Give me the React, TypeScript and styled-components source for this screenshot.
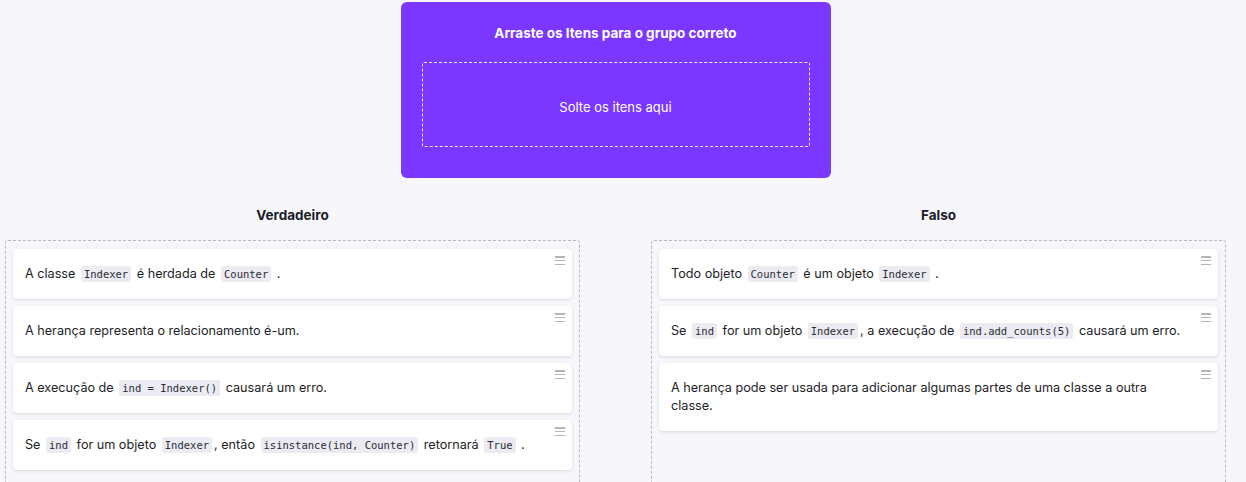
import React from "react";
import styled, { createGlobalStyle } from "styled-components";

const Global = createGlobalStyle`
  html, body { margin: 0; padding: 0; background: #f7f7fb; }
  body { font-family: Inter, "Noto Sans", sans-serif; color: #1d1e26; }
`;

const Page = styled.div`
  width: 1221px;
  margin-left: 5px;
  padding-top: 2px;
  display: flex;
  flex-direction: column;
  align-items: center;
`;

const DropPanel = styled.div`
  width: 430px;
  height: 176px;
  box-sizing: border-box;
  background: #7b36ff;
  border-radius: 6px;
  padding: 23px 21px 31px;
  display: flex;
  flex-direction: column;
  align-items: center;
  color: #fff;
`;

const PanelTitle = styled.div`
  font-size: 13.5px;
  font-weight: 700;
  line-height: 16px;
  height: 37px;
`;

const DropZone = styled.div`
  flex: 1;
  align-self: stretch;
  border: 1px dashed rgba(255, 255, 255, 0.9);
  border-radius: 2px;
  padding-top: 4px;
  display: flex;
  align-items: center;
  justify-content: center;
  font-size: 13px;
`;

const Columns = styled.div`
  align-self: stretch;
  display: grid;
  grid-template-columns: 575px 575px;
  column-gap: 71px;
  margin-top: 29px;
`;

const Column = styled.div`
  display: flex;
  flex-direction: column;
`;

const Heading = styled.div`
  text-align: center;
  font-size: 13.5px;
  font-weight: 700;
  line-height: 16px;
  color: #1b1c28;
  margin-bottom: 17px;
`;

const Bucket = styled.div`
  border: 1px dashed #b9b9c2;
  border-radius: 3px;
  padding: 8px 7px 8px 7px;
  min-height: 240px;
  display: flex;
  flex-direction: column;
  gap: 7px;
`;

const Card = styled.div`
  position: relative;
  background: #fff;
  border-radius: 4px;
  box-shadow: 0 1px 3px rgba(20, 20, 50, 0.14);
  padding: 16px 28px 16px 12px;
  font-size: 12.65px;
  line-height: 18px;
`;

const Handle = styled.span`
  position: absolute;
  top: 7px;
  right: 7px;
  width: 10px;
  height: 9px;
  display: flex;
  flex-direction: column;
  justify-content: space-between;
  & > i {
    display: block;
    height: 1.5px;
    background: #b4b4bd;
  }
`;

const Code = styled.code`
  font-family: "DejaVu Sans Mono", "Liberation Mono", monospace;
  font-size: 10.5px;
  background: #ebebf1;
  border-radius: 3px;
  padding: 2px 3px;
  margin: 0 2px;
  color: #2a2b36;
`;

type Part = string | { c: string };
const c = (s: string) => ({ c: s });

const left: Part[][] = [
  ["A classe ", c("Indexer"), " é herdada de ", c("Counter"), " ."],
  ["A herança representa o relacionamento é-um."],
  ["A execução de ", c("ind = Indexer()"), " causará um erro."],
  ["Se ", c("ind"), " for um objeto ", c("Indexer"), ", então ", c("isinstance(ind, Counter)"), " retornará ", c("True"), " ."],
];

const right: Part[][] = [
  ["Todo objeto ", c("Counter"), " é um objeto ", c("Indexer"), " ."],
  ["Se ", c("ind"), " for um objeto ", c("Indexer"), ", a execução de ", c("ind.add_counts(5)"), " causará um erro."],
  ["A herança pode ser usada para adicionar algumas partes de uma classe a outra classe."],
];

const Item = ({ parts }: { parts: Part[] }) => (
  <Card>
    {parts.map((p, i) => (typeof p === "string" ? <React.Fragment key={i}>{p}</React.Fragment> : <Code key={i}>{p.c}</Code>))}
    <Handle><i /><i /><i /></Handle>
  </Card>
);

export default function App() {
  return (
    <>
      <Global />
      <Page>
        <DropPanel>
          <PanelTitle>Arraste os Itens para o grupo correto</PanelTitle>
          <DropZone>Solte os itens aqui</DropZone>
        </DropPanel>
        <Columns>
          <Column>
            <Heading>Verdadeiro</Heading>
            <Bucket>{left.map((p, i) => <Item key={i} parts={p} />)}</Bucket>
          </Column>
          <Column>
            <Heading>Falso</Heading>
            <Bucket>{right.map((p, i) => <Item key={i} parts={p} />)}</Bucket>
          </Column>
        </Columns>
      </Page>
    </>
  );
}
